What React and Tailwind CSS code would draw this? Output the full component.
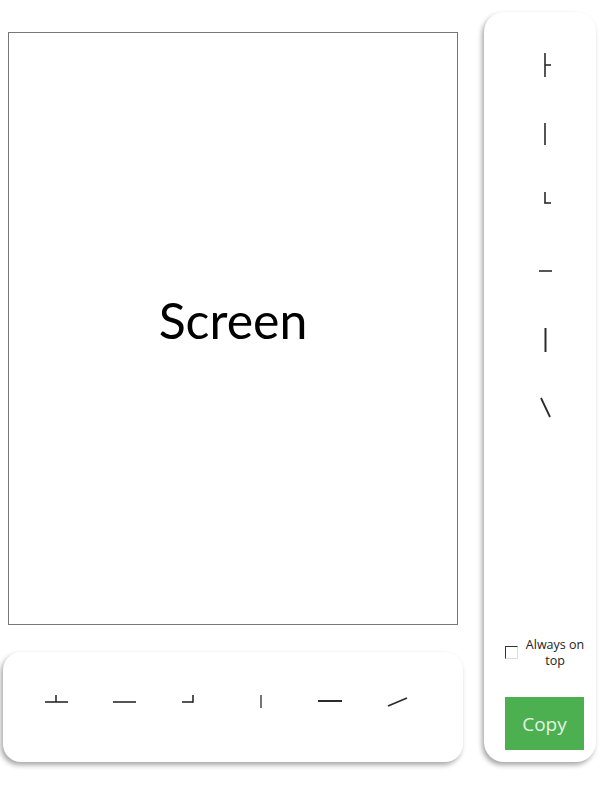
import React from "react";

const C = "#2b2b2b";

function SideIcon({ children }) {
  return (
    <div className="h-[68px] w-full">
      <svg width="112" height="68" viewBox="0 0 112 68" fill="none" stroke={C} strokeLinecap="butt">
        {children}
      </svg>
    </div>
  );
}

function BottomIcon({ children }) {
  return (
    <div className="h-[110px] w-[68px] shrink-0">
      <svg width="68" height="110" viewBox="0 0 68 110" fill="none" stroke={C} strokeLinecap="butt">
        {children}
      </svg>
    </div>
  );
}

export default function App() {
  return (
    <div className="w-[612px] h-[791px] bg-white flex items-start pt-[12px]" style={{ fontFamily: '"Open Sans", "Noto Sans", sans-serif' }}>
      <div className="ml-[3px] w-[460px] flex flex-col mt-[20px]">
        <div className="mx-[5px] h-[593px] border border-[#777777] flex items-center justify-center">
          <span className="text-[50px] text-black leading-none -mt-[18px]" style={{ fontFamily: 'Lato, "Open Sans", sans-serif' }}>
            Screen
          </span>
        </div>
        <div className="mt-[27px] h-[110px] rounded-[18px] bg-white shadow-[-2px_3px_5px_rgba(0,0,0,0.35)] flex pl-[19px]">
          <BottomIcon>
            <line x1="23" y1="50" x2="46" y2="50" strokeWidth="1.6" />
            <line x1="34" y1="43" x2="34" y2="50" strokeWidth="1.6" />
          </BottomIcon>
          <BottomIcon>
            <line x1="23" y1="50" x2="46" y2="50" strokeWidth="1.6" />
          </BottomIcon>
          <BottomIcon>
            <line x1="24" y1="50" x2="35" y2="50" strokeWidth="1.6" />
            <line x1="35" y1="43" x2="35" y2="50.8" strokeWidth="1.6" />
          </BottomIcon>
          <BottomIcon>
            <line x1="35" y1="43" x2="35" y2="56" strokeWidth="1.3" />
          </BottomIcon>
          <BottomIcon>
            <line x1="24" y1="49" x2="48" y2="49" strokeWidth="2" />
          </BottomIcon>
          <BottomIcon>
            <line x1="26" y1="54" x2="45" y2="46" strokeWidth="1.8" />
          </BottomIcon>
        </div>
      </div>
      <div className="ml-[21px] w-[112px] h-[750px] rounded-[20px] bg-white shadow-[-2px_3px_5px_rgba(0,0,0,0.35)] flex flex-col pt-[19px]">
        <SideIcon>
          <line x1="61" y1="22" x2="61" y2="46" strokeWidth="1.6" />
          <line x1="61" y1="34" x2="67" y2="34" strokeWidth="1.6" />
        </SideIcon>
        <SideIcon>
          <line x1="61" y1="24" x2="61" y2="46" strokeWidth="1.6" />
        </SideIcon>
        <SideIcon>
          <line x1="61" y1="25" x2="61" y2="36" strokeWidth="1.6" />
          <line x1="60.2" y1="36" x2="67" y2="36" strokeWidth="1.6" />
        </SideIcon>
        <SideIcon>
          <line x1="55" y1="36" x2="68" y2="36" strokeWidth="1.6" />
        </SideIcon>
        <SideIcon>
          <line x1="61.5" y1="25" x2="61.5" y2="49" strokeWidth="2" />
        </SideIcon>
        <SideIcon>
          <line x1="57" y1="27" x2="66" y2="46" strokeWidth="1.8" />
        </SideIcon>
        <div className="flex-1" />
        <div className="flex items-start pl-[21px] gap-[5px]">
          <div className="mt-[9px] w-[13px] h-[13px] border-t-[1.5px] border-l-[1.5px] border-t-[#333] border-l-[#333] border-r border-b border-r-[#ddd] border-b-[#ddd] bg-white" />
          <div className="text-[12.5px] leading-[16px] text-[#222] text-center w-[64px]" style={{ fontFamily: '"Open Sans", sans-serif' }}>
            Always on
            <br />
            top
          </div>
        </div>
        <div className="mt-[28px] mb-[12px] ml-[21px] w-[79px] h-[53px] bg-[#4caf50] flex items-center justify-center">
          <span className="text-[19px] text-[#e3f3e3] mt-[2px]" style={{ fontFamily: '"Open Sans", sans-serif' }}>Copy</span>
        </div>
      </div>
    </div>
  );
}
